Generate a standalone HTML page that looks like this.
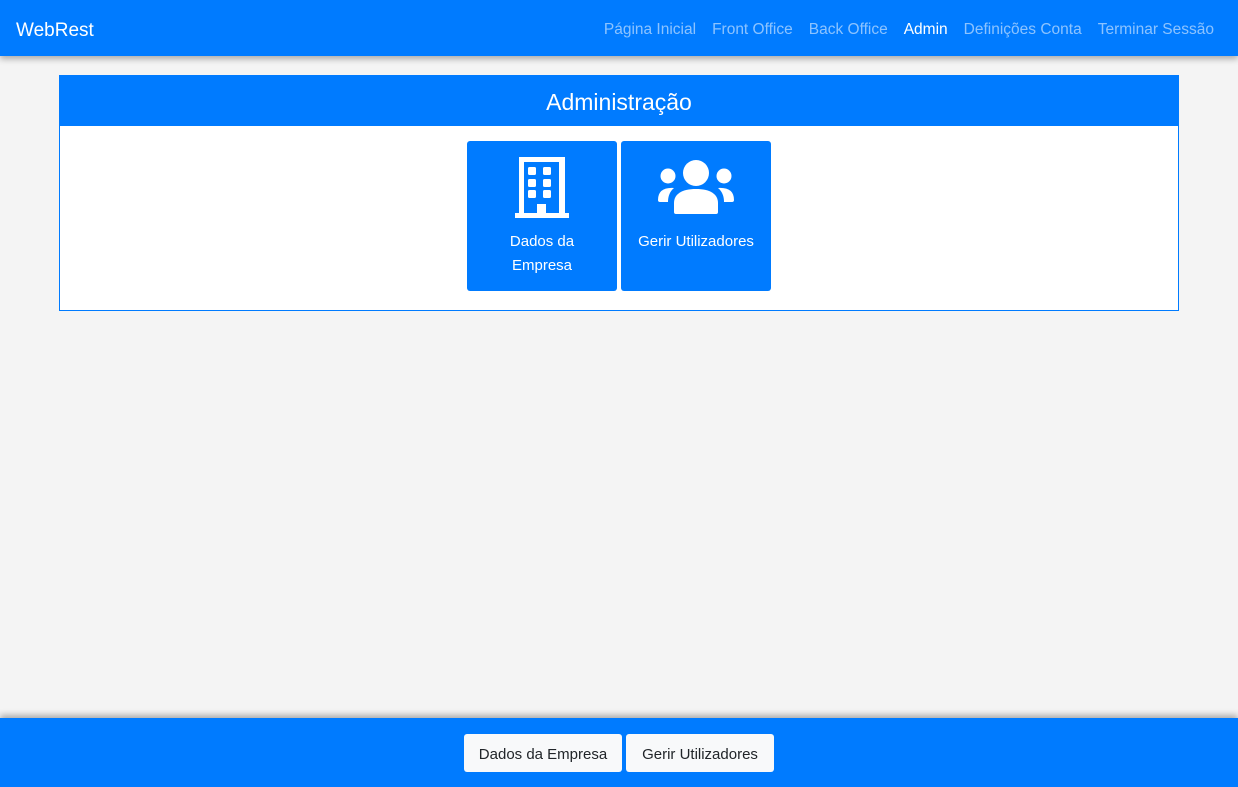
<!DOCTYPE html>
<html><head><meta charset="utf-8"><style>
body{margin:0;width:1238px;height:787px;background:#f4f4f4;font-family:"Liberation Sans",sans-serif;position:relative;overflow:hidden}
.nav{position:absolute;left:0;top:0;width:1238px;height:56px;background:#007bff;box-shadow:0 3px 6px rgba(0,0,0,.3)}
.brand{position:absolute;left:16px;top:20px;color:#fff;font-size:19px}
.links{position:absolute;right:24px;top:21px;font-size:15.5px;color:rgba(255,255,255,.55)}
.links span{margin-left:16px}
.links .a{color:#fff}
.card{position:absolute;left:59px;top:75px;width:1118px;height:234px;border:1px solid #007bff;background:#fff}
.hd{height:50px;background:#007bff;color:#fff;font-size:23px;text-align:center;line-height:52px}
.tile{position:absolute;top:65px;width:150px;height:150px;background:#007bff;border-radius:3px;color:#fff;font-size:15px;text-align:center;line-height:24px}
.foot{position:absolute;left:0;top:718px;width:1238px;height:69px;background:#007bff;box-shadow:0 -3px 6px rgba(0,0,0,.3)}
.btn{position:absolute;top:16px;height:38px;background:#f8f9fa;border-radius:3px;font-size:15px;color:#212529;line-height:42px;text-align:center}
</style></head><body>
<div class="nav"><div class="brand">WebRest</div>
<div class="links"><span>Página Inicial</span><span>Front Office</span><span>Back Office</span><span class="a">Admin</span><span>Definições Conta</span><span>Terminar Sessão</span></div></div>
<div class="card"><div class="hd">Administração</div>
<div class="tile" style="left:407px">
<svg style="position:absolute;left:48px;top:16px" width="54" height="62" viewBox="0 0 54 62"><path fill="#fff" d="M4 0h46v56h4v5H0v-5h4zM9 5v51h13v-9h9v9h13V5z"/><g fill="#fff"><rect x="13" y="10" width="8" height="8" rx="1.5"/><rect x="28" y="10" width="8" height="8" rx="1.5"/><rect x="13" y="22" width="8" height="8" rx="1.5"/><rect x="28" y="22" width="8" height="8" rx="1.5"/><rect x="13" y="33" width="8" height="8" rx="1.5"/><rect x="28" y="33" width="8" height="8" rx="1.5"/></g></svg>
<div style="position:absolute;top:89px;width:150px">Dados da<br>Empresa</div></div>
<div class="tile" style="left:561px">
<svg style="position:absolute;left:37px;top:19px" width="76" height="56" viewBox="0 0 76 56"><g fill="#fff"><circle cx="38" cy="13" r="13"/><circle cx="10" cy="16" r="7.5"/><circle cx="66" cy="16" r="7.5"/><path d="M16 52v-9c0-9 8-14 22-14s22 5 22 14v9q0 2-2 2H18q-2 0-2-2z"/><path d="M0 40q0-13 16-12q-6 5-6 14H2q-2 0-2-2zM76 40q0-13-16-12q6 5 6 14h8q2 0 2-2z"/></g></svg>
<div style="position:absolute;top:89px;width:150px">Gerir Utilizadores</div></div>
</div>
<div class="foot"><div class="btn" style="left:464px;width:158px">Dados da Empresa</div><div class="btn" style="left:626px;width:148px">Gerir Utilizadores</div></div>
</body></html>
